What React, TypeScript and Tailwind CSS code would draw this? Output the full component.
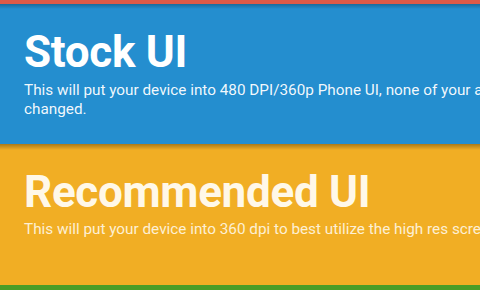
// Density chooser — two stacked colour cards, cut off by the window edge.
export default function App() {
  return (
    <div
      className="relative h-[290px] w-[480px] overflow-hidden bg-[#4a9d27]"
      style={{ fontFamily: "Roboto, 'Liberation Sans', sans-serif" }}
    >
      <div className="h-[4px] bg-[#de5a47]" />

      {/* Stock UI */}
      <section className="relative h-[140px] bg-[#248ecf] pl-[24px] pt-[23px]">
        <div className="absolute inset-x-0 top-0 h-[5px] bg-gradient-to-b from-black/25 to-transparent" />
        <h2 className="text-[44px] font-bold leading-[50px] tracking-[-0.3px] text-white">Stock UI</h2>
        <p className="mt-[4px] w-[560px] text-[15.3px] leading-[19px] text-white/95">
          This will put your device into 480 DPI/360p Phone UI, none of your apps will be changed.
        </p>
      </section>

      {/* Recommended UI */}
      <section className="relative h-[141px] bg-[#f1ae24] pl-[24px] pt-[23px]">
        <div className="absolute inset-x-0 top-0 h-[6px] bg-gradient-to-b from-black/30 to-transparent" />
        <h2 className="text-[44px] font-bold leading-[50px] tracking-[-0.3px] text-[#fff8e8]">Recommended UI</h2>
        <p className="mt-[3px] w-[700px] whitespace-nowrap text-[15.3px] leading-[19px] text-[#fdf0d4]">
          This will put your device into 360 dpi to best utilize the high res screen.
        </p>
      </section>
    </div>
  );
}
